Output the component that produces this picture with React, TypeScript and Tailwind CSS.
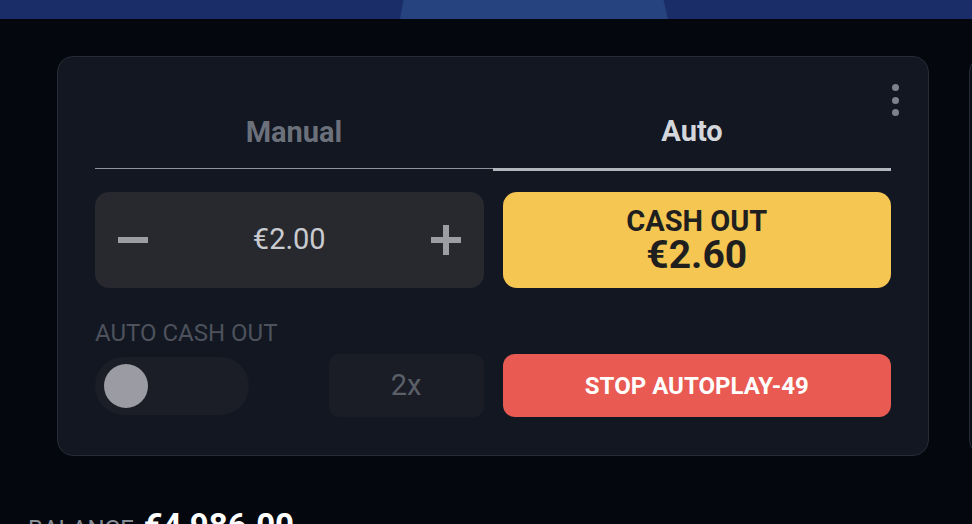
import React from 'react';

function Minus() {
  return (
    <svg width="30" height="30" viewBox="0 0 30 30">
      <rect x="0" y="12" width="30" height="6" fill="#9c9ea4" />
    </svg>
  );
}

function Plus() {
  return (
    <svg width="30" height="30" viewBox="0 0 30 30">
      <rect x="0" y="12" width="30" height="6" fill="#9c9ea4" />
      <rect x="12" y="0" width="6" height="30" fill="#9c9ea4" />
    </svg>
  );
}

export default function App() {
  return (
    <div
      className="h-[524px] w-[972px] overflow-hidden bg-[#05070f]"
      style={{ fontFamily: 'Roboto, "Liberation Sans", sans-serif' }}
    >
      {/* top bar */}
      <div className="flex h-[19px] bg-[#1a2d68]">
        <div className="ml-[400px] h-full w-[268px] bg-[#26437f] [clip-path:polygon(1.3%_0,98.3%_0,100%_100%,0_100%)]" />
      </div>

      <div className="flex gap-[40px] pl-[57px] pt-[37px]">
        {/* bet panel */}
        <div className="relative w-[872px] shrink-0 rounded-[16px] border border-[#262b35] bg-[#121722] px-[37px] pb-[38px] pt-[40px]">
          <div className="absolute right-[29px] top-[27px] flex flex-col gap-[5.5px]">
            <span className="h-[7px] w-[7px] rounded-full bg-[#7d818a]" />
            <span className="h-[7px] w-[7px] rounded-full bg-[#7d818a]" />
            <span className="h-[7px] w-[7px] rounded-full bg-[#7d818a]" />
          </div>

          <div className="flex items-start">
            <div className="flex h-[72px] flex-1 items-center justify-center border-b border-[#8f949c] pt-[1px] text-[29px] font-bold text-[#6b707a]">
              Manual
            </div>
            <div className="flex h-[74px] flex-1 items-center justify-center border-b-[3px] border-[#b2b7be] pb-[2px] text-[29px] font-bold text-[#d3d6db]">
              Auto
            </div>
          </div>

          <div className="mt-[21px] grid grid-cols-2 gap-x-[19px]">
            <div className="flex h-[96px] items-center justify-between rounded-[14px] bg-[#28292e] px-[23px]">
              <Minus />
              <span className="text-[29px] text-[#c9cbd0]">€2.00</span>
              <Plus />
            </div>
            <button className="flex h-[96px] flex-col items-center justify-center rounded-[14px] bg-[#f5c651] pb-[2px] text-[#1f1f1f]">
              <span className="text-[29px] font-bold leading-[32px]">CASH OUT</span>
              <span className="text-[39px] font-bold leading-[36px]">€2.60</span>
            </button>

            <div className="mt-[32px]">
              <div className="text-[24px] leading-[26px] text-[#4d525c]">AUTO CASH OUT</div>
              <div className="mt-[8px] flex items-center justify-between">
                <div className="flex h-[58px] w-[154px] items-center rounded-full bg-[#1b1e27] px-[9px]">
                  <span className="h-[44px] w-[44px] rounded-full bg-[#9a9ba3]" />
                </div>
                <div className="flex h-[63px] w-[155px] items-center justify-center rounded-[10px] bg-[#1a1d26] text-[29px] text-[#5b5f68]">
                  2x
                </div>
              </div>
            </div>
            <button className="flex h-[63px] items-center justify-center self-end rounded-[12px] bg-[#e85a52] text-[24px] font-bold text-white">
              STOP AUTOPLAY-49
            </button>
          </div>
        </div>

        {/* next panel, cut off */}
        <div className="h-[400px] w-[300px] shrink-0 rounded-[16px] border border-[#262b35] bg-[#0c1019]" />
      </div>

      <div className="mt-[54px] flex items-baseline gap-[10px] pl-[28px]">
        <span className="text-[24px] leading-[32px] text-[#8a8e96]">BALANCE</span>
        <span className="text-[33px] font-bold leading-[32px] text-white">€4,986.00</span>
      </div>
    </div>
  );
}
